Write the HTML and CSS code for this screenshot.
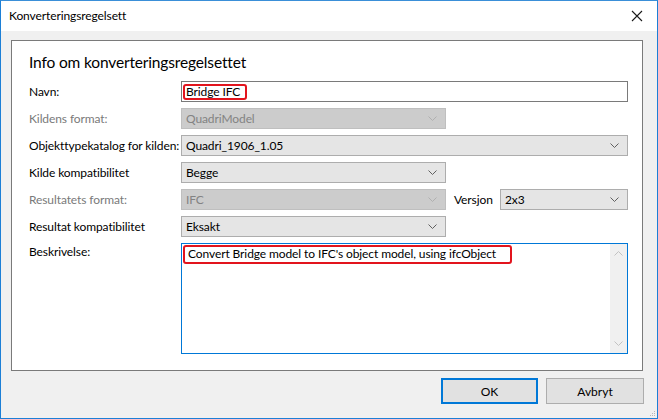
FILE: index.html
```html
<!DOCTYPE html>
<html lang="no">
<head>
	<meta charset="UTF-8">
	<title>Konverteringsregelsett</title>
	<link rel="stylesheet" href="styles.css">
</head>
<body>
	<div class="window">
		<!-- tittellinje -->
		<div class="titlebar">
			<span class="title">Konverteringsregelsett</span>
			<svg class="close" width="12" height="12" viewBox="0 0 12 12">
				<path d="M1 1 L11 11 M11 1 L1 11" stroke="#1a1a1a" stroke-width="1.1" fill="none"/>
			</svg>
		</div>
		<div class="client">
			<div class="panel">
				<h1 class="heading">Info om konverteringsregelsettet</h1>
				<div class="form">
					<div class="label">Navn:</div>
					<div class="textbox"><span class="mark">Bridge IFC</span></div>

					<div class="label off">Kildens format:</div>
					<div class="combo narrow off"><span>QuadriModel</span>
						<svg class="chev" width="9" height="5" viewBox="0 0 9 5"><path d="M0.5 0.5 L4.5 4.5 L8.5 0.5" fill="none" stroke="#b0b0b0"/></svg>
					</div>

					<div class="label">Objekttypekatalog for kilden:</div>
					<div class="combo"><span>Quadri_1906_1.05</span>
						<svg class="chev" width="9" height="5" viewBox="0 0 9 5"><path d="M0.5 0.5 L4.5 4.5 L8.5 0.5" fill="none" stroke="#606060"/></svg>
					</div>

					<div class="label">Kilde kompatibilitet</div>
					<div class="combo narrow"><span>Begge</span>
						<svg class="chev" width="9" height="5" viewBox="0 0 9 5"><path d="M0.5 0.5 L4.5 4.5 L8.5 0.5" fill="none" stroke="#606060"/></svg>
					</div>

					<div class="label off">Resultatets format:</div>
					<div class="pair">
						<div class="combo narrow off"><span>IFC</span>
							<svg class="chev" width="9" height="5" viewBox="0 0 9 5"><path d="M0.5 0.5 L4.5 4.5 L8.5 0.5" fill="none" stroke="#b0b0b0"/></svg>
						</div>
						<span class="inline-label">Versjon</span>
						<div class="combo grow"><span>2x3</span>
							<svg class="chev" width="9" height="5" viewBox="0 0 9 5"><path d="M0.5 0.5 L4.5 4.5 L8.5 0.5" fill="none" stroke="#606060"/></svg>
						</div>
					</div>

					<div class="label">Resultat kompatibilitet</div>
					<div class="combo narrow"><span>Eksakt</span>
						<svg class="chev" width="9" height="5" viewBox="0 0 9 5"><path d="M0.5 0.5 L4.5 4.5 L8.5 0.5" fill="none" stroke="#606060"/></svg>
					</div>

					<div class="label top">Beskrivelse:</div>
					<div class="memo">
						<div class="memo-text"><span class="mark">Convert Bridge model to IFC's object model, using ifcObject</span></div>
						<div class="vscroll">
							<svg width="9" height="5" viewBox="0 0 9 5"><path d="M0.5 4.5 L4.5 0.5 L8.5 4.5" fill="none" stroke="#c2c2c2"/></svg>
							<svg width="9" height="5" viewBox="0 0 9 5"><path d="M0.5 0.5 L4.5 4.5 L8.5 0.5" fill="none" stroke="#c2c2c2"/></svg>
						</div>
					</div>
				</div>
			</div>
			<div class="buttons">
				<button class="btn default">OK</button>
				<button class="btn">Avbryt</button>
			</div>
			<svg class="grip" width="7" height="7" viewBox="0 0 7 7">
				<rect x="5" y="1" width="1" height="1" fill="#b8b8b8"/>
				<rect x="3" y="3" width="1" height="1" fill="#b8b8b8"/>
				<rect x="5" y="3" width="1" height="1" fill="#b8b8b8"/>
				<rect x="1" y="5" width="1" height="1" fill="#b8b8b8"/>
				<rect x="3" y="5" width="1" height="1" fill="#b8b8b8"/>
				<rect x="5" y="5" width="1" height="1" fill="#b8b8b8"/>
			</svg>
		</div>
	</div>
</body>
</html>
```

FILE: styles.css
```css
body{
	margin:0;
	font-family:Lato, "Liberation Sans", sans-serif;
	font-size:12px;
	letter-spacing:-0.1px;
	color:#000;
	background:#fff;
}
.window{
	width:656px;
	height:417px;
	border:1px solid #1c7fd6;
	border-top-color:#3a8fd8;
	background:#f0f0f0;
	display:flex;
	flex-direction:column;
}
.titlebar{
	height:30px;
	background:#fff;
	display:flex;
	align-items:center;
	justify-content:space-between;
	padding:0 10px 0 8px;
}
.title{
	font-size:12px;
	margin-top:-1px;
}
.close{
	margin-right:4px;
}
.client{
	flex:1;
	position:relative;
	padding:9px 0 0 10px;
}
.panel{
	width:632px;
	background:#fff;
	border:1px solid #7a7a7a;
	padding:0 16px 16px 17px;
	box-sizing:border-box;
}
.heading{
	font-weight:normal;
	font-size:15.5px;
	letter-spacing:-0.15px;
	line-height:20px;
	margin:11px 0 9px 0;
}
.form{
	display:grid;
	grid-template-columns:152px 447px;
	grid-template-rows:repeat(6,21px) 111px;
	row-gap:6px;
}
.label{
	display:flex;
	align-items:center;
	white-space:nowrap;
}
.label.off{
	color:#7a7a7a;
}
.label.top{
	align-items:flex-start;
	padding-top:1px;
}
.textbox{
	border:1px solid #7a7a7a;
	display:flex;
	align-items:center;
	padding-left:1px;
}
.mark{
	display:inline-block;
	border:2px solid #e2141d;
	border-radius:3px;
	padding:0 3px 0 2px;
	line-height:12px;
}
.textbox .mark{
	padding:0 5px 0 1px;
}
.combo{
	border:1px solid #adadad;
	background:#e5e5e5;
	display:flex;
	align-items:center;
	justify-content:space-between;
	padding:0 8px 0 4px;
}
.combo.narrow{
	width:265px;
	box-sizing:border-box;
}
.combo.off{
	background:#cccccc;
	border-color:#bfbfbf;
	color:#838383;
}
.pair{
	display:flex;
	align-items:stretch;
}
.inline-label{
	display:flex;
	align-items:center;
	margin:0 0 0 8px;
	width:46px;
}
.combo.grow{
	flex:1;
}
.memo{
	border:1px solid #0078d7;
	display:flex;
}
.memo-text{
	flex:1;
	padding:1px 0 0 1px;
}
.memo .mark{
	padding:1px 14px 2px 3px;
}
.vscroll{
	width:17px;
	background:#f0f0f0;
	display:flex;
	flex-direction:column;
	justify-content:space-between;
	align-items:center;
	padding:7px 0 7px 0;
}
.buttons{
	display:flex;
	justify-content:flex-end;
	gap:8px;
	margin-top:7px;
	padding-right:13px;
}
.btn{
	width:98px;
	height:26px;
	border:1px solid #adadad;
	background:#e1e1e1;
	font-family:Lato, "Liberation Sans", sans-serif;
	font-size:12px;
	color:#000;
	padding:0;
}
.btn.default{
	border:2px solid #0078d7;
	width:97px;
}
.grip{
	position:absolute;
	right:1px;
	bottom:1px;
}
```
